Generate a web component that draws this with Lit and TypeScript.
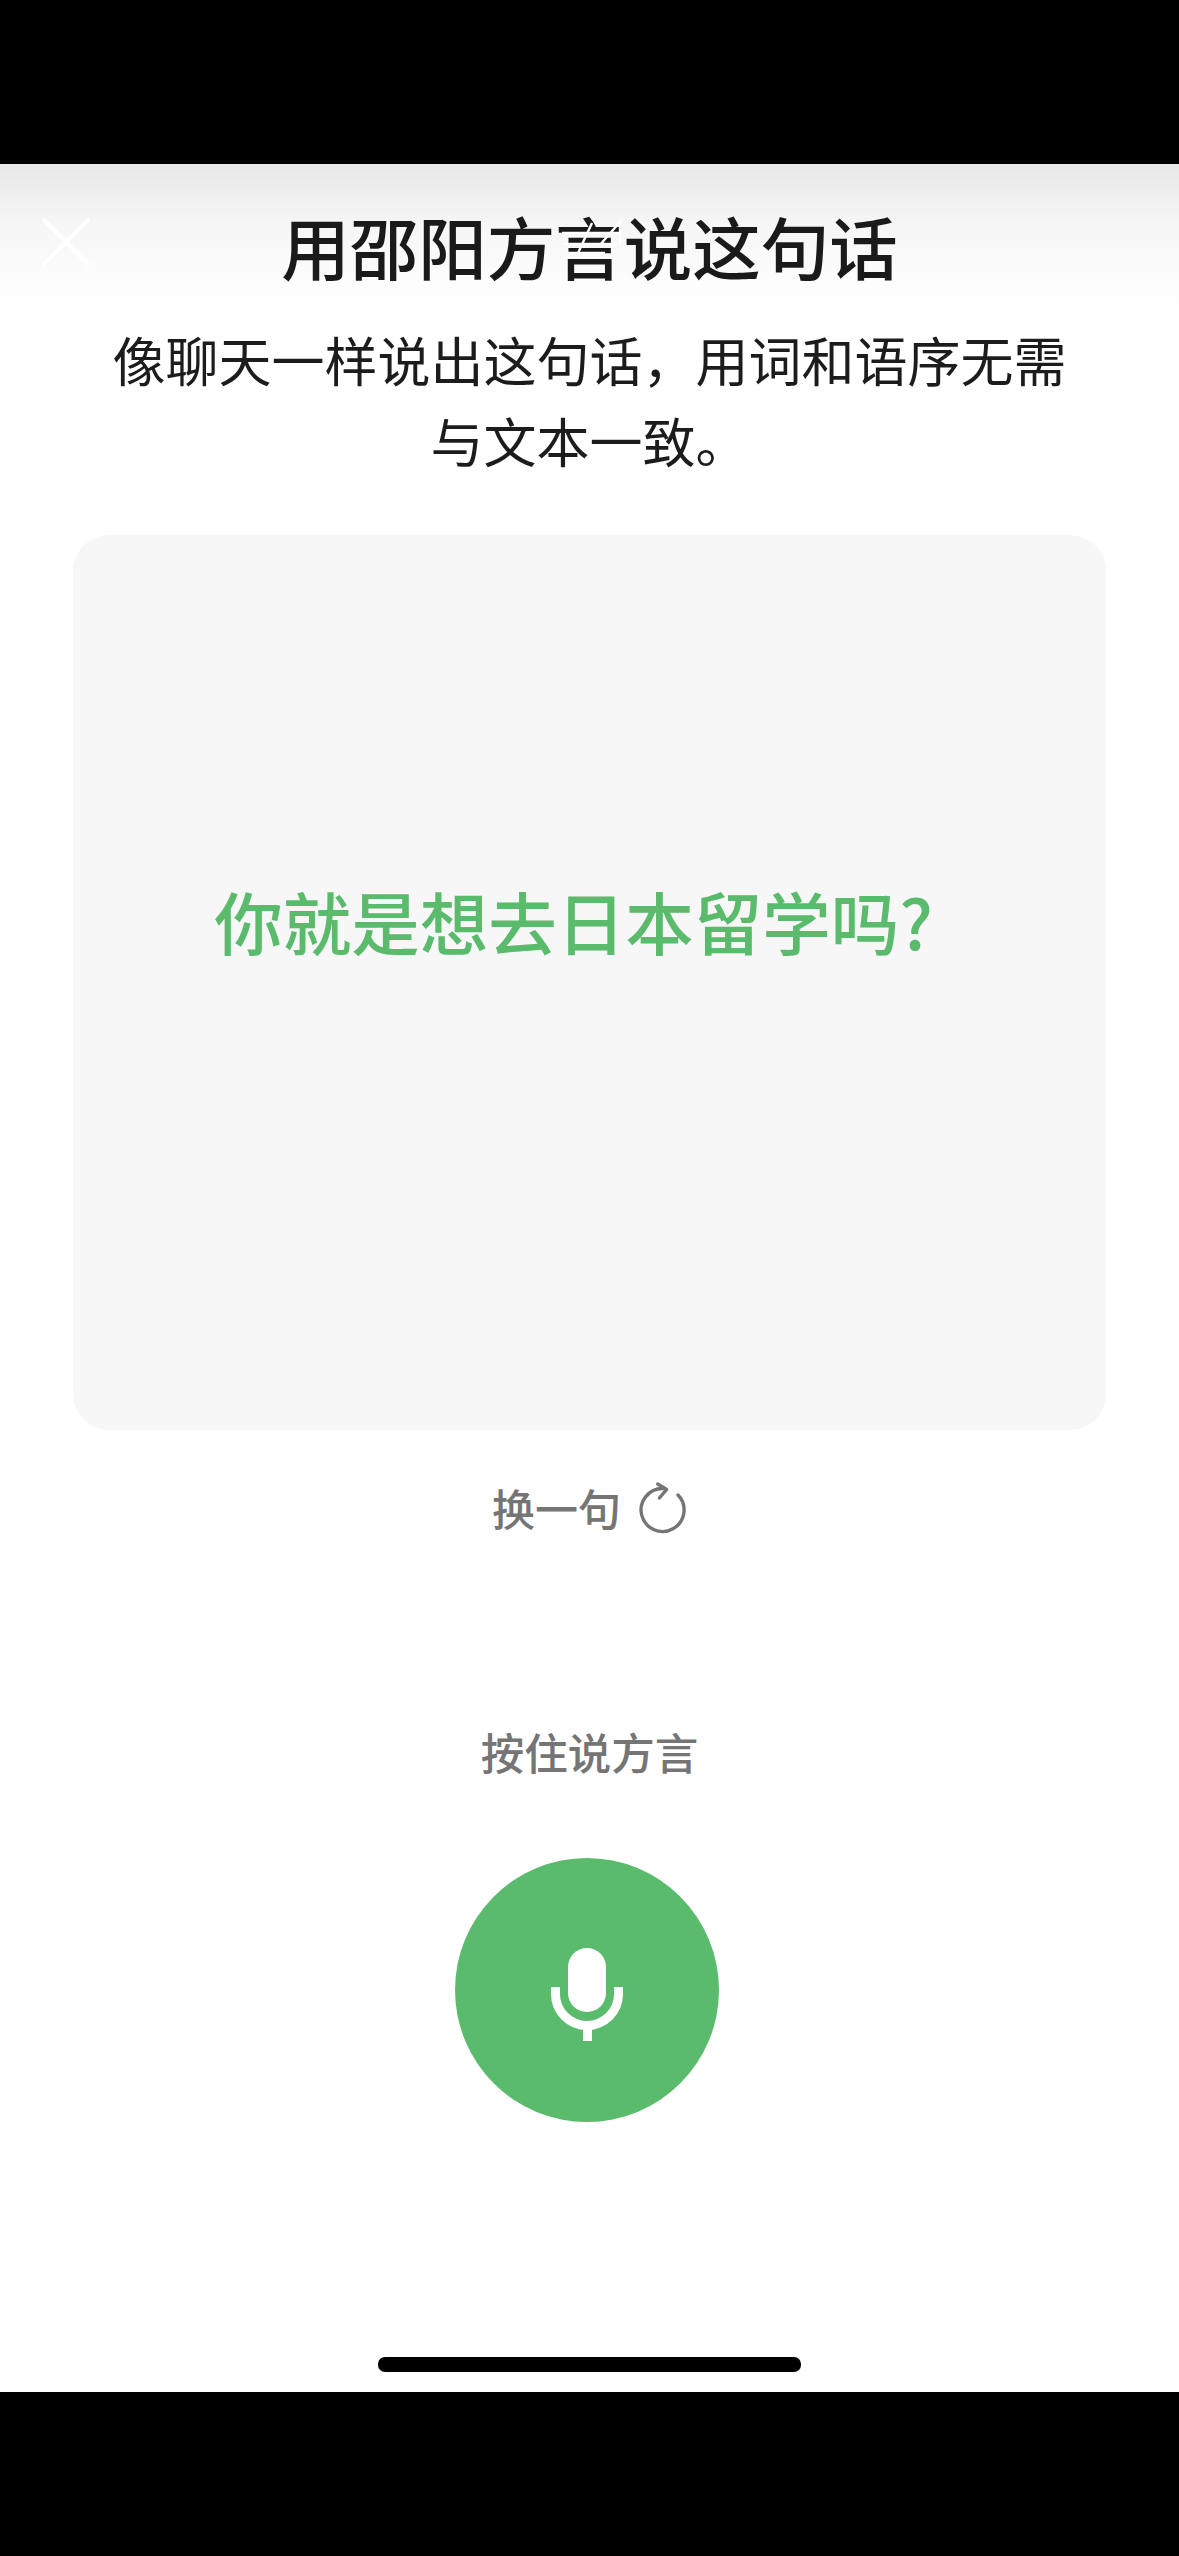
import { LitElement, html, css } from "lit";
import { customElement } from "lit/decorators.js";

@customElement("app-root")
export class AppRoot extends LitElement {
  static styles = css`
    :host {
      display: block;
      width: 1179px;
      height: 2556px;
      background: #000;
      font-family: "Noto Sans CJK SC", "Noto Sans", sans-serif;
      overflow: hidden;
    }
    .page {
      display: flex;
      flex-direction: column;
      padding: 164px 0;
      height: 2556px;
      box-sizing: border-box;
    }
    .screen {
      position: relative;
      flex: 1;
      display: flex;
      flex-direction: column;
      align-items: center;
      padding-top: 42px;
      background: linear-gradient(#e8e8e8 0, #f6f6f6 60px, #fdfdfd 120px, #fff 190px);
    }
    .close {
      position: absolute;
      left: 42px;
      top: 54px;
      width: 48px;
      height: 48px;
    }
    .glitch {
      position: absolute;
      left: 555px;
      top: 50px;
      width: 70px;
      height: 50px;
    }
    .title {
      margin: 0;
      font-size: 68.5px;
      line-height: 80px;
      font-weight: 500;
      color: #1a1a1a;
    }
    .sub {
      margin: 33px 0 0;
      width: 960px;
      font-size: 53px;
      line-height: 81px;
      text-align: center;
      color: #1c1c1c;
    }
    .card {
      margin-top: 54px;
      width: 1033px;
      height: 895px;
      border-radius: 36px;
      background: #f7f7f7;
      display: flex;
      align-items: center;
      justify-content: center;
      box-sizing: border-box;
      padding: 0 32px 124px 0;
      font-size: 68.5px;
      font-weight: 500;
      color: #5bbb6d;
    }
    .swap {
      margin-top: 47px;
      display: flex;
      align-items: center;
      gap: 18px;
      height: 60px;
      font-size: 43px;
      line-height: 60px;
      font-weight: 500;
      color: #757575;
    }
    .swap svg {
      width: 48px;
      height: 54px;
    }
    .hold {
      margin-top: 185px;
      font-size: 43.5px;
      line-height: 60px;
      font-weight: 500;
      color: #757575;
    }
    .mic {
      margin: 76px 5px 0 0;
      width: 264px;
      height: 264px;
      border-radius: 50%;
      background: #5bbb6d;
      display: flex;
      align-items: center;
      justify-content: center;
    }
    .mic svg {
      width: 72px;
      height: 93px;
      margin-top: 9px;
    }
    .home {
      margin-top: 235px;
      width: 423px;
      height: 15px;
      border-radius: 7px;
      background: #000;
    }
  `;

  render() {
    return html`
      <div class="page">
        <div class="screen">
          <svg class="close" viewBox="0 0 48 48" fill="none" stroke="#fff" stroke-width="4" stroke-linecap="round">
            <path d="M2 2 L46 46 M46 2 L2 46" />
          </svg>
          <h1 class="title">用邵阳方言说这句话</h1>
          <svg class="glitch" viewBox="0 0 70 50" fill="none" stroke="#fff" stroke-width="2.4">
            <path d="M7 19 H65 M9 30 H62 M12 39 H50 M23 39 L37 9 M44 32 L65 8 V30" />
          </svg>
          <p class="sub">像聊天一样说出这句话，用词和语序无需与文本一致。</p>
          <div class="card">你就是想去日本留学吗?</div>
          <div class="swap">
            <span>换一句</span>
            <svg viewBox="0 0 48 54" fill="none" stroke="#757575" stroke-width="3.4" stroke-linecap="round" stroke-linejoin="round">
              <path d="M24 8.5 A21.5 21.5 0 1 0 39 15" />
              <path d="M18.7 4 L27.7 9.4 L20.4 18" />
            </svg>
          </div>
          <div class="hold">按住说方言</div>
          <div class="mic">
            <svg viewBox="0 0 72 93" fill="none">
              <rect x="17" y="0" width="38" height="64" rx="19" fill="#fff" />
              <path d="M4.5 39 V46 A31.5 31.5 0 0 0 67.5 46 V39" stroke="#fff" stroke-width="9" />
              <rect x="32" y="76" width="9" height="17" fill="#fff" />
            </svg>
          </div>
          <div class="home"></div>
        </div>
      </div>
    `;
  }
}
